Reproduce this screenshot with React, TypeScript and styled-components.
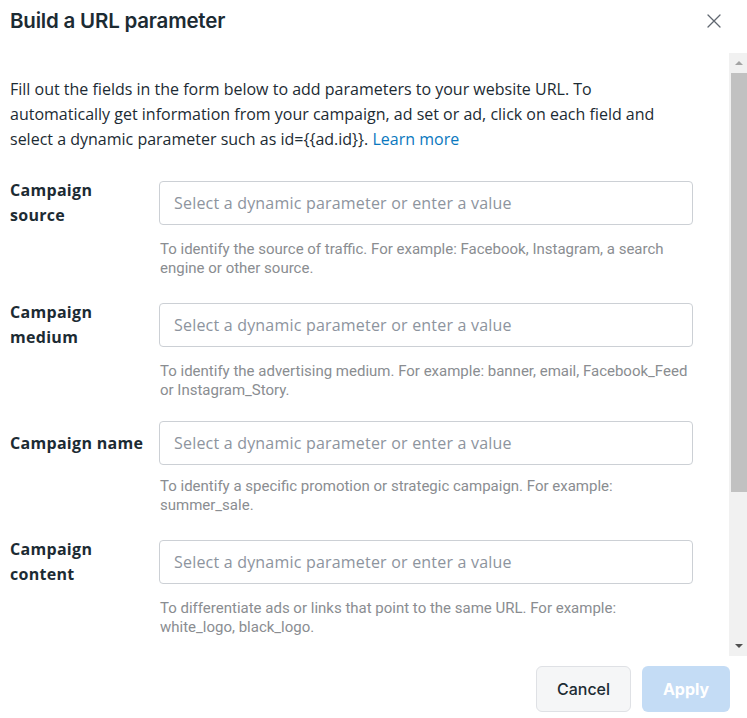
import styled, { createGlobalStyle } from 'styled-components';

const INTRO =
  'Fill out the fields in the form below to add parameters to your website URL. To automatically get information from your campaign, ad set or ad, click on each field and select a dynamic parameter such as id={{ad.id}}. ';

const FIELDS = [
  {
    label: 'Campaign source',
    help: 'To identify the source of traffic. For example: Facebook, Instagram, a search engine or other source.',
  },
  {
    label: 'Campaign medium',
    help: 'To identify the advertising medium. For example: banner, email, Facebook_Feed or Instagram_Story.',
  },
  {
    label: 'Campaign name',
    help: 'To identify a specific promotion or strategic campaign. For example: summer_sale.',
  },
  {
    label: 'Campaign content',
    help: 'To differentiate ads or links that point to the same URL. For example: white_logo, black_logo.',
  },
];

const PLACEHOLDER = 'Select a dynamic parameter or enter a value';

const App = () => {
  return (
    <>
      <GlobalStyle />
      <Dialog>
        <Header>
          <Title>Build a URL parameter</Title>
          <CloseButton aria-label="Close">
            <svg width="16" height="16" viewBox="0 0 16 16">
              <path d="M2 2 L14 14 M14 2 L2 14" stroke="#606770" strokeWidth="1.3" strokeLinecap="round" />
            </svg>
          </CloseButton>
        </Header>
        <Main>
          <Body>
            <Intro>
              {INTRO}
              <Link href="#">Learn more</Link>
            </Intro>
            <Fields>
              {FIELDS.map((field) => (
                <FieldRow key={field.label}>
                  <Label>{field.label}</Label>
                  <Input placeholder={PLACEHOLDER} />
                  <Help>{field.help}</Help>
                </FieldRow>
              ))}
            </Fields>
          </Body>
          <ScrollBar>
            <ScrollButton>
              <Arrow $up />
            </ScrollButton>
            <Track>
              <Thumb />
            </Track>
            <ScrollButton>
              <Arrow />
            </ScrollButton>
          </ScrollBar>
        </Main>
        <Footer>
          <CancelButton>Cancel</CancelButton>
          <ApplyButton disabled>Apply</ApplyButton>
        </Footer>
      </Dialog>
    </>
  );
};

const GlobalStyle = createGlobalStyle`
  * { box-sizing: border-box; }
  body {
    margin: 0;
    background: #ffffff;
    font-family: "Open Sans", Roboto, sans-serif;
  }
`;

const Dialog = styled.div`
  display: flex;
  flex-direction: column;

  width: 747px;
  height: 718px;
  background: #ffffff;
`;

const Header = styled.header`
  display: flex;
  justify-content: space-between;
  align-items: flex-start;

  height: 53px;
  padding: 9px 21px 0 10px;
`;

const Title = styled.h1`
  margin: 0;

  color: #1c2b33;
  font-family: Inter, Roboto, sans-serif;
  font-size: 20.5px;
  font-weight: 600;
  line-height: 24px;
  letter-spacing: -0.2px;
`;

const CloseButton = styled.button`
  display: flex;
  align-items: center;
  justify-content: center;

  width: 24px;
  height: 24px;
  padding: 0;
  border: none;
  background: none;
`;

const Main = styled.div`
  display: flex;

  height: 603px;
`;

const Body = styled.div`
  overflow: hidden;
  flex: 1;

  padding: 24px 36px 0 10px;
`;

const ScrollBar = styled.div`
  display: flex;
  flex-direction: column;

  width: 18px;
  background: #f1f1f1;
`;

const ScrollButton = styled.div`
  display: flex;
  align-items: center;
  justify-content: center;

  height: 20px;
  padding-left: 2px;
`;

const Arrow = styled.span<{ $up?: boolean }>`
  width: 0;
  height: 0;
  border-left: 4px solid transparent;
  border-right: 4px solid transparent;
  ${(p) =>
    p.$up ? 'border-bottom: 4px solid #a3a3a3;' : 'border-top: 4px solid #505050;'}
`;

const Track = styled.div`
  flex: 1;
  padding-left: 2px;
`;

const Thumb = styled.div`
  height: 419px;
  background: #c1c1c1;
`;

const Intro = styled.p`
  margin: 0 0 26px;

  color: #1c2b33;
  font-size: 16px;
  line-height: 25px;
`;

const Link = styled.a`
  color: #0a78be;
  text-decoration: none;
`;

const Fields = styled.div`
  display: flex;
  flex-direction: column;
  gap: 21.5px;
`;

const FieldRow = styled.div`
  display: grid;
  grid-template-columns: 149px 1fr;
  grid-template-rows: auto auto;
  align-items: center;
`;

const Label = styled.label`
  grid-column: 1;
  grid-row: 1;

  padding-right: 12px;
  color: #1c2b33;
  font-size: 16px;
  font-weight: 700;
  line-height: 25px;
  letter-spacing: 0.3px;
`;

const Input = styled.input`
  grid-column: 2;
  grid-row: 1;

  width: 100%;
  height: 44px;
  padding: 0 14px;
  border: 1px solid #ccd0d5;
  border-radius: 4px;
  outline: none;

  color: #1c2b33;
  font-family: "Open Sans", Roboto, sans-serif;
  font-size: 16px;
  letter-spacing: 0.2px;

  &::placeholder {
    color: #8d949e;
  }
`;

const Help = styled.div`
  grid-column: 2;
  grid-row: 2;

  margin-top: 12px;
  padding-left: 1px;
  color: #8a8d91;
  font-family: Roboto, sans-serif;
  font-size: 15px;
  line-height: 19px;
`;

const Footer = styled.footer`
  display: flex;
  justify-content: flex-end;
  gap: 11px;

  height: 62px;
  padding: 10px 17px 0 0;
`;

const BaseButton = styled.button`
  height: 46px;
  padding: 0 17px;
  border-radius: 6px;

  font-family: Inter, Roboto, sans-serif;
  font-size: 16px;
`;

const CancelButton = styled(BaseButton)`
  width: 95px;
  border: 1px solid #dfe1e5;
  background: #f5f6f7;
  color: #1c2b33;
  font-weight: 500;
`;

const ApplyButton = styled(BaseButton)`
  width: 88px;
  border: none;
  background: #c4dcf5;
  color: #ffffff;
  font-weight: 700;
`;

export default App;
